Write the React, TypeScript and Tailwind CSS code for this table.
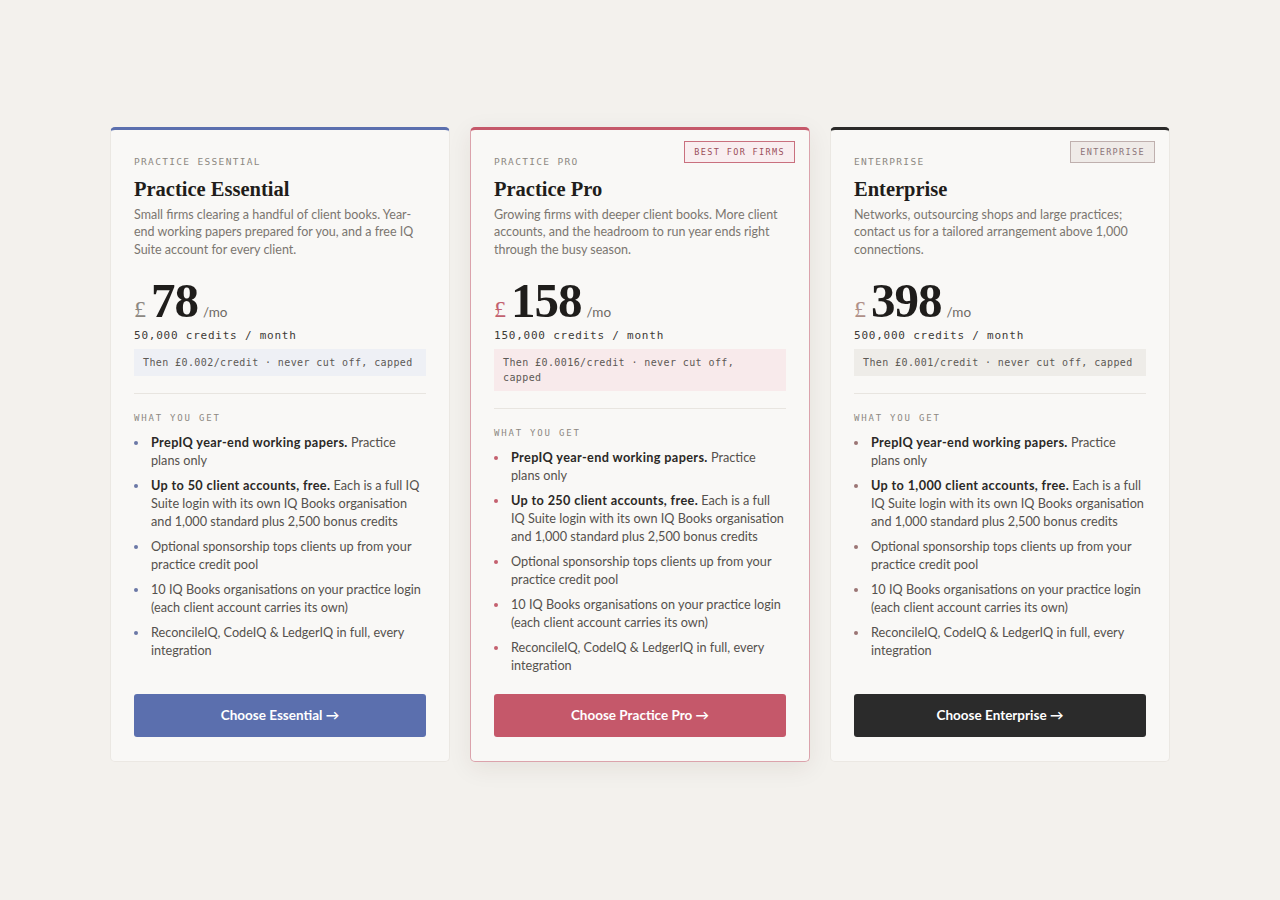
import React from "react";

type Plan = {
    eyebrow: string,
    name: string,
    desc: string,
    price: string,
    credits: string,
    overage: string,
    badge?: string,
    features: { bold?: string, text: string }[],
    cta: string,
    theme: "blue" | "red" | "dark"
}

const features = (limit: string) => [
    { bold: "PrepIQ year-end working papers.", text: " Practice plans only" },
    { bold: `Up to ${limit} client accounts, free.`, text: " Each is a full IQ Suite login with its own IQ Books organisation and 1,000 standard plus 2,500 bonus credits" },
    { text: "Optional sponsorship tops clients up from your practice credit pool" },
    { text: "10 IQ Books organisations on your practice login (each client account carries its own)" },
    { text: "ReconcileIQ, CodeIQ & LedgerIQ in full, every integration" },
]

const plans: Plan[] = [
    {
        eyebrow: "Practice Essential",
        name: "Practice Essential",
        desc: "Small firms clearing a handful of client books. Year-end working papers prepared for you, and a free IQ Suite account for every client.",
        price: "78",
        credits: "50,000 credits / month",
        overage: "Then £0.002/credit · never cut off, capped",
        features: features("50"),
        cta: "Choose Essential →",
        theme: "blue",
    },
    {
        eyebrow: "Practice Pro",
        name: "Practice Pro",
        desc: "Growing firms with deeper client books. More client accounts, and the headroom to run year ends right through the busy season.",
        price: "158",
        credits: "150,000 credits / month",
        overage: "Then £0.0016/credit · never cut off, capped",
        badge: "Best for firms",
        features: features("250"),
        cta: "Choose Practice Pro →",
        theme: "red",
    },
    {
        eyebrow: "Enterprise",
        name: "Enterprise",
        desc: "Networks, outsourcing shops and large practices; contact us for a tailored arrangement above 1,000 connections.",
        price: "398",
        credits: "500,000 credits / month",
        overage: "Then £0.001/credit · never cut off, capped",
        badge: "Enterprise",
        features: features("1,000"),
        cta: "Choose Enterprise →",
        theme: "dark",
    },
]

const themes = {
    blue: {
        card: "border-[#ebe8e3] border-t-[#5b6fae]",
        pound: "text-[#8d8882]",
        box: "bg-[#eef0f5]",
        dot: "bg-[#6b78a6]",
        btn: "bg-[#5b6fae]",
        badge: "",
    },
    red: {
        card: "border-[#dba3ac] border-t-[#c5586a] shadow-[0_6px_24px_rgba(60,40,30,0.08)]",
        pound: "text-[#c3616f]",
        box: "bg-[#f8eaeb]",
        dot: "bg-[#c4606e]",
        btn: "bg-[#c5586a]",
        badge: "border-[#c9707e] bg-[#f9eef0] text-[#9c4e5b]",
    },
    dark: {
        card: "border-[#ebe8e3] border-t-[#2b2a29]",
        pound: "text-[#b09088]",
        box: "bg-[#eeece8]",
        dot: "bg-[#9b7574]",
        btn: "bg-[#2b2b2b]",
        badge: "border-[#bfb0ae] bg-[#efebe8] text-[#8c7478]",
    },
}

const mono = "font-['DejaVu_Sans_Mono',monospace]"
const serif = "font-['Liberation_Serif',serif]"

const PlanCard = ({ plan }: { plan: Plan }) => {
    const t = themes[plan.theme]
    return <div className={`relative flex flex-col flex-1 bg-[#f9f8f6] border border-t-[3px] rounded-[5px] px-[23px] pt-6 pb-6 ${t.card}`}>
        {plan.badge && (
            <div className={`absolute top-[11px] right-[14px] border px-[9px] h-[22px] flex items-center text-[8.5px] tracking-[0.16em] uppercase ${mono} ${t.badge}`}>
                {plan.badge}
            </div>
        )}
        <div className={`${mono} text-[9.5px] leading-[14px] tracking-[0.14em] uppercase text-[#8d8882] mt-[1px]`}>
            {plan.eyebrow}
        </div>
        <h2 className={`${serif} font-bold text-[20.5px] leading-[26px] text-[#1f1d1b] mt-[7px]`}>
            {plan.name}
        </h2>
        <p className="text-[12.5px] leading-[17.3px] text-[#7b7670] mt-[4px]">
            {plan.desc}
        </p>
        <div className="flex items-baseline mt-[21px] h-[44px]">
            <span className={`${serif} text-[24px] ${t.pound}`}>£</span>
            <span className={`${serif} font-bold text-[49px] leading-[44px] text-[#1f1d1b] ml-[5px] tracking-[-0.02em]`}>{plan.price}</span>
            <span className="text-[13.5px] text-[#6f6a65] ml-[5px]">/mo</span>
        </div>
        <div className={`${mono} text-[11px] leading-[16px] tracking-[0.07em] text-[#3d3a37] mt-[5px]`}>
            {plan.credits}
        </div>
        <div className={`${mono} ${t.box} text-[10px] leading-[15px] tracking-[0.04em] text-[#5d5955] px-[9px] py-[6px] mt-[5px]`}>
            {plan.overage}
        </div>
        <div className="border-t border-[#e8e5e0] mt-[17px]" />
        <div className={`${mono} text-[9px] leading-[14px] tracking-[0.2em] uppercase text-[#8d8882] mt-[17px]`}>
            What you get
        </div>
        <ul className="mt-[8px] flex flex-col gap-[7px]">
            {plan.features.map((f, i) => (
                <li key={i} className="flex text-[12.7px] leading-[18px] text-[#55514d]">
                    <span className={`shrink-0 w-[4px] h-[4px] rounded-full mt-[8px] mr-[13px] ${t.dot}`} />
                    <span>
                        {f.bold && <b className="font-bold text-[#2b2926] tracking-[0.35px]">{f.bold}</b>}
                        {f.text}
                    </span>
                </li>
            ))}
        </ul>
        <div className="flex-1 min-h-[20px]" />
        <button className={`h-[43px] w-full rounded-[3px] text-white text-[13.5px] font-bold ${t.btn}`}>
            {plan.cta}
        </button>
    </div>
}

export default function App() {
    return <div className="min-h-screen bg-[#f3f1ed] font-['Lato',sans-serif] pt-[127px]">
        <div className="grid grid-cols-3 gap-5 w-[1060px] mx-auto">
            {plans.map((p) => (
                <div key={p.name} className="flex flex-col">
                    <PlanCard plan={p} />
                </div>
            ))}
        </div>
    </div>
}
